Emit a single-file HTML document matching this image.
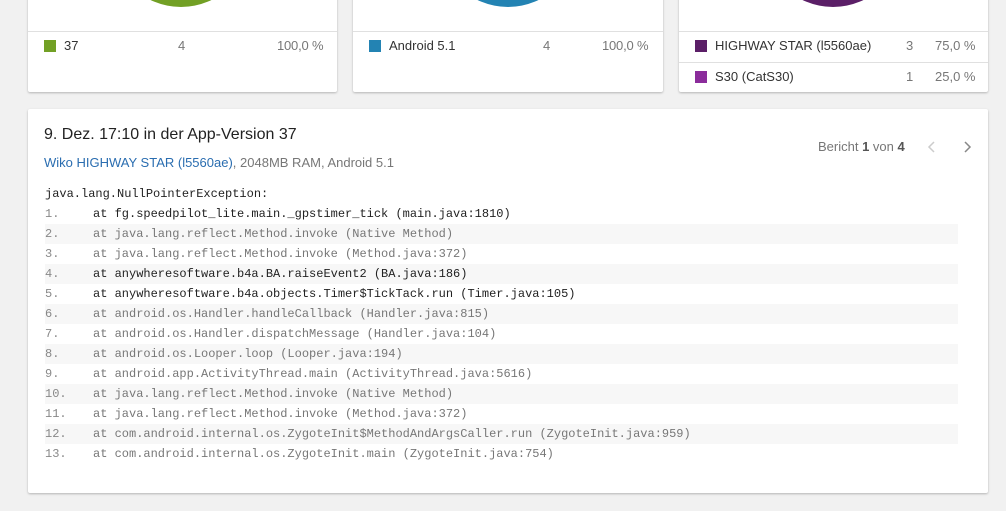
<!DOCTYPE html>
<html><head><style>
body{margin:0;width:1006px;height:511px;background:#f1f1f1;font-family:"Liberation Sans",sans-serif;position:relative;overflow:hidden}
.card{position:absolute;background:#fff;box-shadow:0 1px 2px rgba(0,0,0,.25);border-radius:2px;overflow:hidden}
.pie{position:absolute;border-radius:50%;width:140px;height:140px;top:-128px}
.sep{position:absolute;left:0;right:0;height:1px;background:#e0e0e0}
.row{position:absolute;left:0;right:0;height:20px;font-size:13px;color:#333;line-height:20px}
.sw{position:absolute;width:12px;height:12px;top:4px}
.n{position:absolute;color:#777}
.st{position:absolute;left:45px;width:913px;height:20px;line-height:21px;font-family:"Liberation Mono",monospace;font-size:12px;color:#222;white-space:pre}
.st.g{color:#777}
.st.b{background:#f7f7f7}
.st i{font-style:normal;color:#888;position:absolute;left:0}
.st span{position:absolute;left:48px}
</style></head><body>
<div class="card" style="left:28px;top:-5px;width:309px;height:97px">
 <div class="pie" style="left:83px;background:#72a025"></div>
 <div class="sep" style="top:36px"></div>
 <div class="row" style="top:41px"><div class="sw" style="left:16px;background:#72a025"></div><span style="position:absolute;left:36px">37</span><span class="n" style="left:150px">4</span><span class="n" style="left:249px;letter-spacing:-0.2px">100,0 %</span></div>
</div>
<div class="card" style="left:353px;top:-5px;width:310px;height:97px">
 <div class="pie" style="left:85px;background:#2383b3"></div>
 <div class="sep" style="top:36px"></div>
 <div class="row" style="top:41px"><div class="sw" style="left:16px;background:#2383b3"></div><span style="position:absolute;left:36px">Android 5.1</span><span class="n" style="left:190px">4</span><span class="n" style="left:249px;letter-spacing:-0.2px">100,0 %</span></div>
</div>
<div class="card" style="left:679px;top:-5px;width:309px;height:97px">
 <div class="pie" style="left:84px;background:#5b1f67"></div>
 <div class="sep" style="top:36px"></div>
 <div class="row" style="top:41px"><div class="sw" style="left:16px;background:#5b1f67"></div><span style="position:absolute;left:36px">HIGHWAY STAR (l5560ae)</span><span class="n" style="left:227px">3</span><span class="n" style="left:256px">75,0 %</span></div>
 <div class="sep" style="top:67px"></div>
 <div class="row" style="top:72px"><div class="sw" style="left:16px;background:#8b2c9b"></div><span style="position:absolute;left:36px">S30 (CatS30)</span><span class="n" style="left:227px">1</span><span class="n" style="left:256px">25,0 %</span></div>
</div>
<div class="card" style="left:28px;top:109px;width:960px;height:384px">
 <div style="position:absolute;left:16px;top:17px;font-size:16px;color:#222">9. Dez. 17:10 in der App-Version 37</div>
 <div style="position:absolute;left:16px;top:46px;font-size:13px;color:#777"><span style="color:#2a6db0">Wiko HIGHWAY STAR (l5560ae)</span>, 2048MB RAM, Android 5.1</div>
 <div style="position:absolute;left:790px;top:30px;font-size:13px;color:#777">Bericht <b style="color:#555">1</b> von <b style="color:#555">4</b></div>
 <svg style="position:absolute;left:898px;top:31px" width="12" height="14"><path d="M8 2L3 7L8 12" stroke="#ccc" stroke-width="1.5" fill="none"/></svg>
 <svg style="position:absolute;left:933px;top:31px" width="12" height="14"><path d="M4 2L9 7L4 12" stroke="#888" stroke-width="1.5" fill="none"/></svg>
</div>
<div class="st" style="top:184px;left:45px">java.lang.NullPointerException:</div>
<div class="st" style="top:204px"><i>1.</i><span>at fg.speedpilot_lite.main._gpstimer_tick (main.java:1810)</span></div>
<div class="st g b" style="top:224px"><i>2.</i><span>at java.lang.reflect.Method.invoke (Native Method)</span></div>
<div class="st g" style="top:244px"><i>3.</i><span>at java.lang.reflect.Method.invoke (Method.java:372)</span></div>
<div class="st b" style="top:264px"><i>4.</i><span>at anywheresoftware.b4a.BA.raiseEvent2 (BA.java:186)</span></div>
<div class="st" style="top:284px"><i>5.</i><span>at anywheresoftware.b4a.objects.Timer$TickTack.run (Timer.java:105)</span></div>
<div class="st g b" style="top:304px"><i>6.</i><span>at android.os.Handler.handleCallback (Handler.java:815)</span></div>
<div class="st g" style="top:324px"><i>7.</i><span>at android.os.Handler.dispatchMessage (Handler.java:104)</span></div>
<div class="st g b" style="top:344px"><i>8.</i><span>at android.os.Looper.loop (Looper.java:194)</span></div>
<div class="st g" style="top:364px"><i>9.</i><span>at android.app.ActivityThread.main (ActivityThread.java:5616)</span></div>
<div class="st g b" style="top:384px"><i>10.</i><span>at java.lang.reflect.Method.invoke (Native Method)</span></div>
<div class="st g" style="top:404px"><i>11.</i><span>at java.lang.reflect.Method.invoke (Method.java:372)</span></div>
<div class="st g b" style="top:424px"><i>12.</i><span>at com.android.internal.os.ZygoteInit$MethodAndArgsCaller.run (ZygoteInit.java:959)</span></div>
<div class="st g" style="top:444px"><i>13.</i><span>at com.android.internal.os.ZygoteInit.main (ZygoteInit.java:754)</span></div>
</body></html>
